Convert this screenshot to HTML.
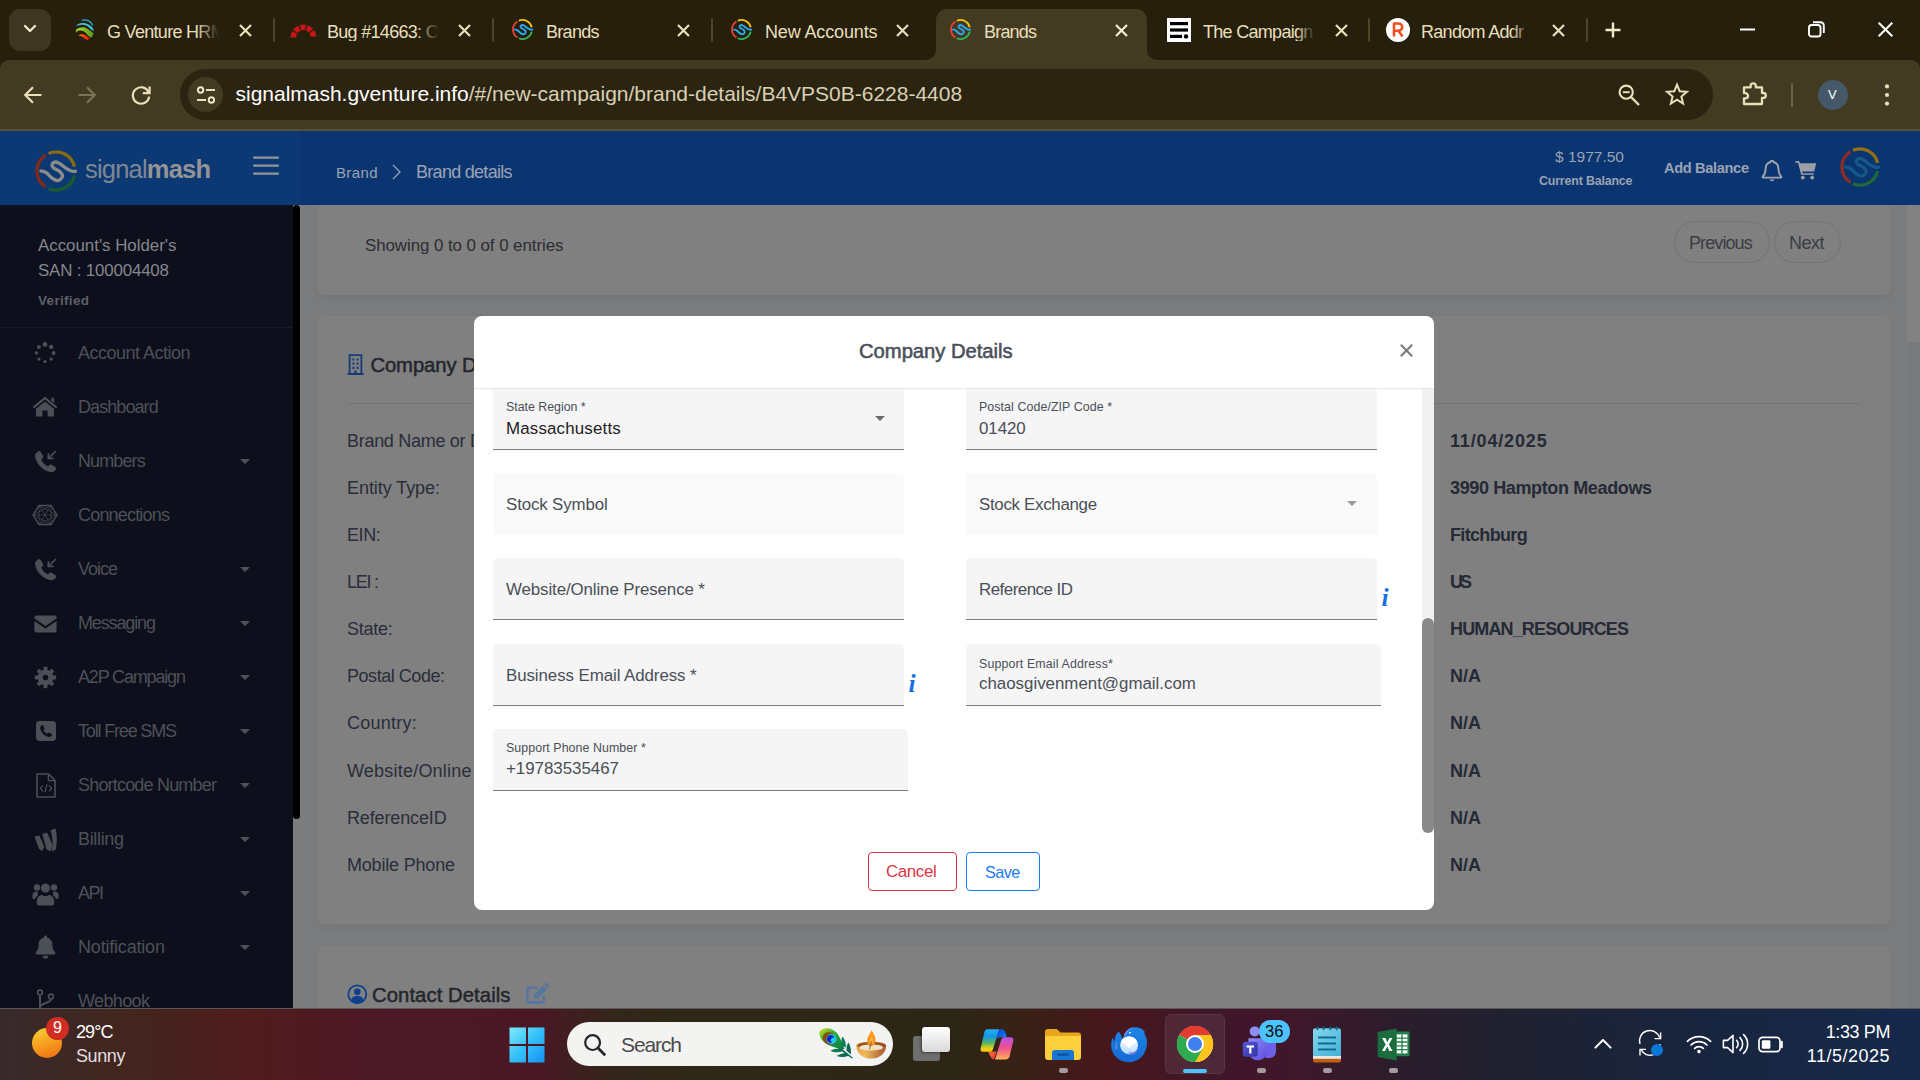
<!DOCTYPE html>
<html lang="en">
<head>
<meta charset="utf-8">
<title>Brands</title>
<style>
*{box-sizing:border-box;margin:0;padding:0}
html,body{width:1920px;height:1080px;overflow:hidden;background:#808080;font-family:"Liberation Sans",sans-serif}
.a{position:absolute}
.t{position:absolute;white-space:nowrap;line-height:1}
svg{position:absolute;overflow:visible}

/* ---------- browser chrome ---------- */
#tabs{left:0;top:0;width:1920px;height:72px;background:#261f0c}
#toolbar{left:0;top:60px;width:1920px;height:71px;background:#423a21;border-radius:9px 9px 0 0;border-bottom:2px solid #57503a}
#urlpill{left:180px;top:69px;width:1533px;height:51px;border-radius:26px;background:#2b2411}
.tab{color:#eadfbb;font-size:18px;top:23px}
.sep{width:2px;height:24px;top:18px;background:#4d452a;border-radius:1px}
.x{stroke:#eadfbb;stroke-width:2.2;fill:none;stroke-linecap:butt}

/* ---------- app ---------- */
#hdrL{left:0;top:131px;width:300px;height:74px;background:#0c3873}
#hdrR{left:300px;top:131px;width:1620px;height:74px;background:#0b3571}
#side{left:0;top:205px;width:293px;height:803px;background:#0d0f1c}
#sscroll{left:293px;top:205px;width:7px;height:614px;background:#000;border-radius:4px}
#page{left:300px;top:205px;width:1620px;height:803px;background:#7b7c7e}
.card{background:#808080;border-radius:6px;box-shadow:0 4px 10px rgba(0,0,0,.05)}
.nav{color:#4e5157;font-size:18px;left:78px;letter-spacing:-.4px}
.car{left:240px;width:0;height:0;border-left:5px solid transparent;border-right:5px solid transparent;border-top:5px solid #4e5157}
.lab{color:#2a2d3a;font-size:18px;left:347px;letter-spacing:-.3px}
.val{color:#262936;font-size:18px;left:1450px;font-weight:bold;letter-spacing:-.5px}

/* ---------- modal ---------- */
#modal{left:474px;top:316px;width:960px;height:594px;background:#fff;border-radius:8px;overflow:hidden}
.f{position:absolute;height:62px;background:#f5f5f5;border-radius:5px 5px 0 0;border-bottom:1.5px solid #7d7d7d}
.f.dis{background:#fafafa;border-bottom:0}
.fl{position:absolute;left:13px;white-space:nowrap;line-height:1;color:#4a4f57}
.sm{font-size:12.4px;top:13.2px}
.bg{font-size:16.9px;top:32.4px}
.ph{font-size:16.9px;top:24.3px}

/* ---------- taskbar ---------- */
#task{left:0;top:1008px;width:1920px;height:72px;background:linear-gradient(90deg,#382a2c 0%,#41261e 6%,#4f1c1c 13%,#4c1827 20%,#4a1825 28%,#33261a 32%,#2e2817 36%,#2d2616 50%,#3a2017 53.5%,#46171c 57.5%,#40172a 63%,#40172a 67%,#2b1d2c 73%,#20212f 78%,#18253f 89%,#16294b 100%);border-top:1px solid #5c5658}
</style>
</head>
<body>

<!-- ================= TAB STRIP ================= -->
<div class="a" id="tabs"></div>
<!-- tab-search button -->
<div class="a" style="left:9px;top:9px;width:42px;height:42px;border-radius:11px;background:#3d3621"></div>
<svg style="left:22px;top:23px" width="16" height="12" viewBox="0 0 16 12"><path d="M3 3 L8 8 L13 3" fill="none" stroke="#f1e8c9" stroke-width="2.4" stroke-linecap="round" stroke-linejoin="round"/></svg>

<!-- tab 1 : G Venture HRM -->
<svg style="left:74.5px;top:18.9px" width="20" height="22" viewBox="0 0 20 22"><defs><linearGradient id="gv1" x1="0" y1="0" x2="1" y2="0"><stop offset="0" stop-color="#a9dc33"/><stop offset="1" stop-color="#5a9a18"/></linearGradient><linearGradient id="gv2" x1="0" y1="0" x2="1" y2="0"><stop offset="0" stop-color="#f6820f"/><stop offset="1" stop-color="#f00d0d"/></linearGradient></defs>
 <path d="M7.4 1.3 C11.6 .6,15.6 2.6,17.4 5.8" fill="none" stroke="#2b9cbd" stroke-width="1.5" stroke-linecap="round"/>
 <path d="M.5 7.6 C3 3.6,8.6 3.2,12.6 5 C16.2 6.6,18.6 9.2,19 12.2 C17.8 11.4,16 10.6,14.6 9 C12.6 6.8,9.2 5.6,5.6 5.9 C3.4 6.1,1.6 6.6,.5 7.6Z" fill="#3fc4e8"/>
 <path d="M.9 13.6 C.2 10.6,2.6 8.6,6 8.4 C9 8.2,11.4 8.8,13.6 10.4 C15.6 11.8,17.6 13.2,18.6 14.6 L16.4 18.8 C14.4 17.8,13 16.4,11.4 14.4 C9.6 12.2,6.8 11.2,4.2 11.6 C2.6 11.8,1.4 12.6,.9 13.6Z" fill="url(#gv1)"/>
 <path d="M3.3 17 C3.9 15.4,6.4 14.8,8.6 15.4 C11 16.2,13.2 17.8,14.6 19.4 L12.4 21.2 C10.6 20.4,9.2 19,7.6 18 C6 17,4.4 16.6,3.3 17Z" fill="url(#gv2)"/>
 <path d="M5.4 18.2 C6.8 18.6,8.2 19.8,9 21 C7.4 20.8,6 19.8,5.4 18.2Z" fill="#1c2a7a"/>
</svg>
<div class="t tab" id="tb1" style="left:107px;width:113px;overflow:hidden;letter-spacing:-0.7px">G Venture HRM</div>
<div class="a" style="left:196px;top:12px;width:26px;height:36px;background:linear-gradient(90deg,rgba(38,31,12,0),#261f0c 90%)"></div>
<svg style="left:239px;top:24px" width="13" height="13" viewBox="0 0 13 13"><path class="x" d="M1 1L12 12M12 1L1 12"/></svg>
<div class="a sep" style="left:273px"></div>

<!-- tab 2 : Bug #14663 -->
<svg style="left:290px;top:20px" width="27" height="18" viewBox="0 0 27 18"><path d="M3.4 17.4 A10.1 10.1 0 0 1 23.6 17.4" fill="none" stroke="#c9161a" stroke-width="5.6" stroke-dasharray="5.1 1.25"/></svg>
<div class="t tab" id="tb2" style="left:327px;width:113px;overflow:hidden;letter-spacing:-0.7px">Bug #14663: C</div>
<div class="a" style="left:416px;top:12px;width:26px;height:36px;background:linear-gradient(90deg,rgba(38,31,12,0),#261f0c 90%)"></div>
<svg style="left:458px;top:24px" width="13" height="13" viewBox="0 0 13 13"><path class="x" d="M1 1L12 12M12 1L1 12"/></svg>
<div class="a sep" style="left:492px"></div>

<!-- tab 3 : Brands -->
<svg style="left:511.5px;top:19.2px" width="21" height="21" viewBox="0 0 42 42"><path d="M10.93 4.89 A19 19 0 0 0 10.93 37.11" fill="none" stroke="#ea4335" stroke-width="3.6"/><path d="M13.58 3.51 A19 19 0 0 1 39.51 16.73" fill="none" stroke="#f9c513" stroke-width="3.6"/><path d="M13.58 38.49 A19 19 0 0 0 39.51 25.27" fill="none" stroke="#34b45a" stroke-width="3.6"/><path d="M6.00 21.00C6.88 21.29,9.38 21.54,11.25 22.75C13.12 23.96,15.25 26.96,17.25 28.25C19.25 29.54,21.54 30.83,23.25 30.50C24.96 30.17,27.25 27.75,27.50 26.25C27.75 24.75,26.29 22.92,24.75 21.50C23.21 20.08,19.50 18.96,18.25 17.75C17.00 16.54,16.83 15.21,17.25 14.25C17.67 13.29,19.33 12.00,20.75 12.00C22.17 12.00,23.92 13.12,25.75 14.25C27.58 15.38,29.83 17.58,31.75 18.75C33.67 19.92,35.79 20.83,37.25 21.25C38.71 21.67,39.96 21.25,40.50 21.25" fill="none" stroke="#29aaf0" stroke-width="3.8" stroke-linecap="round"/></svg>
<div class="t tab" id="tb3" style="left:546px;letter-spacing:-0.71px">Brands</div>
<svg style="left:677px;top:24px" width="13" height="13" viewBox="0 0 13 13"><path class="x" d="M1 1L12 12M12 1L1 12"/></svg>
<div class="a sep" style="left:711px"></div>

<!-- tab 4 : New Accounts -->
<svg style="left:730.5px;top:19.2px" width="21" height="21" viewBox="0 0 42 42"><path d="M10.93 4.89 A19 19 0 0 0 10.93 37.11" fill="none" stroke="#ea4335" stroke-width="3.6"/><path d="M13.58 3.51 A19 19 0 0 1 39.51 16.73" fill="none" stroke="#f9c513" stroke-width="3.6"/><path d="M13.58 38.49 A19 19 0 0 0 39.51 25.27" fill="none" stroke="#34b45a" stroke-width="3.6"/><path d="M6.00 21.00C6.88 21.29,9.38 21.54,11.25 22.75C13.12 23.96,15.25 26.96,17.25 28.25C19.25 29.54,21.54 30.83,23.25 30.50C24.96 30.17,27.25 27.75,27.50 26.25C27.75 24.75,26.29 22.92,24.75 21.50C23.21 20.08,19.50 18.96,18.25 17.75C17.00 16.54,16.83 15.21,17.25 14.25C17.67 13.29,19.33 12.00,20.75 12.00C22.17 12.00,23.92 13.12,25.75 14.25C27.58 15.38,29.83 17.58,31.75 18.75C33.67 19.92,35.79 20.83,37.25 21.25C38.71 21.67,39.96 21.25,40.50 21.25" fill="none" stroke="#29aaf0" stroke-width="3.8" stroke-linecap="round"/></svg>
<div class="t tab" id="tb4" style="left:765px;letter-spacing:-0.14px">New Accounts</div>
<svg style="left:896px;top:24px" width="13" height="13" viewBox="0 0 13 13"><path class="x" d="M1 1L12 12M12 1L1 12"/></svg>

<!-- tab 5 : Brands (active) -->
<div class="a" style="left:936px;top:9px;width:211px;height:51px;background:#423a21;border-radius:11px 11px 0 0"></div>
<svg style="left:926px;top:50px" width="10" height="10" viewBox="0 0 10 10"><path d="M10 0 V10 H0 A10 10 0 0 0 10 0Z" fill="#423a21"/></svg>
<svg style="left:1147px;top:50px" width="10" height="10" viewBox="0 0 10 10"><path d="M0 0 V10 H10 A10 10 0 0 1 0 0Z" fill="#423a21"/></svg>
<svg style="left:949.5px;top:19.2px" width="21" height="21" viewBox="0 0 42 42"><path d="M10.93 4.89 A19 19 0 0 0 10.93 37.11" fill="none" stroke="#ea4335" stroke-width="3.6"/><path d="M13.58 3.51 A19 19 0 0 1 39.51 16.73" fill="none" stroke="#f9c513" stroke-width="3.6"/><path d="M13.58 38.49 A19 19 0 0 0 39.51 25.27" fill="none" stroke="#34b45a" stroke-width="3.6"/><path d="M6.00 21.00C6.88 21.29,9.38 21.54,11.25 22.75C13.12 23.96,15.25 26.96,17.25 28.25C19.25 29.54,21.54 30.83,23.25 30.50C24.96 30.17,27.25 27.75,27.50 26.25C27.75 24.75,26.29 22.92,24.75 21.50C23.21 20.08,19.50 18.96,18.25 17.75C17.00 16.54,16.83 15.21,17.25 14.25C17.67 13.29,19.33 12.00,20.75 12.00C22.17 12.00,23.92 13.12,25.75 14.25C27.58 15.38,29.83 17.58,31.75 18.75C33.67 19.92,35.79 20.83,37.25 21.25C38.71 21.67,39.96 21.25,40.50 21.25" fill="none" stroke="#29aaf0" stroke-width="3.8" stroke-linecap="round"/></svg>
<div class="t tab" id="tb5" style="left:984px;letter-spacing:-0.81px">Brands</div>
<svg style="left:1115px;top:24px" width="13" height="13" viewBox="0 0 13 13"><path class="x" d="M1 1L12 12M12 1L1 12" style="stroke:#f5eed6"/></svg>

<!-- tab 6 : The Campaign -->
<svg style="left:1167px;top:18px" width="24" height="24" viewBox="0 0 24 24">
 <rect width="24" height="24" fill="#fff"/>
 <rect x="3" y="4" width="18" height="3.2" fill="#000"/><rect x="3" y="10.4" width="18" height="3.2" fill="#000"/><rect x="3" y="16.8" width="12" height="3.2" fill="#000"/><circle cx="19" cy="18.4" r="2.2" fill="#000"/>
</svg>
<div class="t tab" id="tb6" style="left:1203px;width:113px;overflow:hidden;letter-spacing:-0.7px">The Campaign</div>
<div class="a" style="left:1296px;top:12px;width:22px;height:36px;background:linear-gradient(90deg,rgba(38,31,12,0),#261f0c 90%)"></div>
<svg style="left:1335px;top:24px" width="13" height="13" viewBox="0 0 13 13"><path class="x" d="M1 1L12 12M12 1L1 12"/></svg>
<div class="a sep" style="left:1368px"></div>

<!-- tab 7 : Random Addr -->
<svg style="left:1386px;top:18px" width="24" height="24" viewBox="0 0 24 24"><circle cx="12" cy="12" r="12" fill="#fff"/><path d="M8 18.5 V5.5 H12.6 A3.6 3.6 0 0 1 12.6 12.7 H8 M12.4 12.7 L16.6 18.5" fill="none" stroke="#f0501e" stroke-width="2.6" stroke-linejoin="round"/></svg>
<div class="t tab" id="tb7" style="left:1421px;width:113px;overflow:hidden;letter-spacing:-0.7px">Random Addr</div>
<div class="a" style="left:1510px;top:12px;width:26px;height:36px;background:linear-gradient(90deg,rgba(38,31,12,0),#261f0c 90%)"></div>
<svg style="left:1552px;top:24px" width="13" height="13" viewBox="0 0 13 13"><path class="x" d="M1 1L12 12M12 1L1 12"/></svg>
<div class="a sep" style="left:1586px"></div>

<!-- new tab + window controls -->
<svg style="left:1605px;top:22px" width="16" height="16" viewBox="0 0 16 16"><path d="M8 0.5V15.5M0.5 8H15.5" stroke="#f1e8c9" stroke-width="2.4" fill="none"/></svg>
<svg style="left:1740px;top:28px" width="15" height="3" viewBox="0 0 15 3"><path d="M0 1.5H15" stroke="#fff" stroke-width="2"/></svg>
<svg style="left:1808px;top:21px" width="17" height="17" viewBox="0 0 17 17"><rect x="1" y="4" width="11.5" height="11.5" rx="2.6" fill="none" stroke="#fff" stroke-width="1.9"/><path d="M5 1.2H12.6A3.2 3.2 0 0 1 15.8 4.4V12" fill="none" stroke="#fff" stroke-width="1.9"/></svg>
<svg style="left:1878px;top:22px" width="15" height="15" viewBox="0 0 15 15"><path d="M0.7 0.7L14.3 14.3M14.3 0.7L0.7 14.3" stroke="#fff" stroke-width="2" fill="none"/></svg>
<div class="a" id="toolbar"></div>
<div class="a" id="urlpill"></div>
<!-- nav buttons -->
<svg style="left:23px;top:85px" width="20" height="20" viewBox="0 0 20 20"><path d="M18.5 10H2.5M10 2.2L2.2 10L10 17.8" fill="none" stroke="#eadfbb" stroke-width="2.2" stroke-linejoin="miter"/></svg>
<svg style="left:77px;top:85px" width="20" height="20" viewBox="0 0 20 20"><path d="M1.5 10H17.5M10 2.2L17.8 10L10 17.8" fill="none" stroke="#7d7455" stroke-width="2.2"/></svg>
<svg style="left:130px;top:84px" width="22" height="22" viewBox="0 0 22 22"><path d="M18.6 8.2 A8.2 8.2 0 1 0 19.2 12.6" fill="none" stroke="#eadfbb" stroke-width="2.2"/><path d="M19.6 2.4V9.2H12.8" fill="none" stroke="#eadfbb" stroke-width="2.2"/></svg>
<!-- site info chip -->
<div class="a" style="left:188px;top:77px;width:35px;height:35px;border-radius:50%;background:#423a21"></div>
<svg style="left:195px;top:84px" width="22" height="22" viewBox="0 0 22 22">
 <circle cx="5.6" cy="6" r="2.7" fill="none" stroke="#f1e8c9" stroke-width="1.9"/><path d="M11 6H20" stroke="#f1e8c9" stroke-width="1.9"/>
 <circle cx="16.4" cy="16" r="2.7" fill="none" stroke="#f1e8c9" stroke-width="1.9"/><path d="M2 16H11" stroke="#f1e8c9" stroke-width="1.9"/>
</svg>
<div class="t" id="url" style="left:235.5px;top:83px;font-size:21px;color:#ffffff;letter-spacing:-0.01px"><span>signalmash.gventure.info</span><span style="color:#d9d0b4">/#/new-campaign/brand-details/B4VPS0B-6228-4408</span></div>
<!-- zoom + star -->
<svg style="left:1617px;top:83px" width="24" height="24" viewBox="0 0 24 24"><circle cx="9.2" cy="9.2" r="6.6" fill="none" stroke="#eadfbb" stroke-width="2.1"/><path d="M14 14L22 22" stroke="#eadfbb" stroke-width="2.4"/><path d="M5.8 9.2H12.6" stroke="#eadfbb" stroke-width="2"/></svg>
<svg style="left:1665px;top:82px" width="24" height="24" viewBox="0 0 24 24"><path d="M12 2.6 L14.7 9.3 L21.9 9.8 L16.4 14.5 L18.1 21.5 L12 17.7 L5.9 21.5 L7.6 14.5 L2.1 9.8 L9.3 9.3 Z" fill="none" stroke="#eadfbb" stroke-width="2" stroke-linejoin="miter"/></svg>
<!-- extensions -->
<svg style="left:1741px;top:81px" width="26" height="26" viewBox="0 0 26 26"><path d="M3 6.4 H9.6 V5 A2.6 2.6 0 0 1 14.8 5 V6.4 H21 V12 H22.4 A2.4 2.4 0 0 1 22.4 16.8 H21 V23 H3 V17.4 H4.4 A2.6 2.6 0 0 0 4.4 12.2 H3 Z" fill="none" stroke="#eadfbb" stroke-width="2.3" stroke-linejoin="round"/></svg>
<div class="a" style="left:1791px;top:83px;width:2px;height:24px;background:#6b6040;border-radius:1px"></div>
<!-- avatar -->
<div class="a" style="left:1818px;top:80px;width:30px;height:30px;border-radius:50%;background:#44586a"></div>
<div class="t" style="left:1828px;top:88px;font-size:13px;color:#fff">V</div>
<!-- kebab -->
<svg style="left:1883px;top:83px" width="8" height="24" viewBox="0 0 8 24"><circle cx="4" cy="3.4" r="2.1" fill="#eadfbb"/><circle cx="4" cy="12" r="2.1" fill="#eadfbb"/><circle cx="4" cy="20.6" r="2.1" fill="#eadfbb"/></svg>

<!-- ================= APP ================= -->
<div class="a" id="hdrL"></div>
<div class="a" id="hdrR"></div>
<!-- header : logo -->
<svg style="left:35.2px;top:149.7px" width="42" height="42" viewBox="0 0 42 42"><path d="M10.93 4.89 A19 19 0 0 0 10.93 37.11" fill="none" stroke="#7e2a1c" stroke-width="3.4"/><path d="M13.58 3.51 A19 19 0 0 1 39.51 16.73" fill="none" stroke="#8a6a12" stroke-width="3.4"/><path d="M13.58 38.49 A19 19 0 0 0 39.51 25.27" fill="none" stroke="#1b5a30" stroke-width="3.4"/><path d="M6.00 21.00C6.88 21.29,9.38 21.54,11.25 22.75C13.12 23.96,15.25 26.96,17.25 28.25C19.25 29.54,21.54 30.83,23.25 30.50C24.96 30.17,27.25 27.75,27.50 26.25C27.75 24.75,26.29 22.92,24.75 21.50C23.21 20.08,19.50 18.96,18.25 17.75C17.00 16.54,16.83 15.21,17.25 14.25C17.67 13.29,19.33 12.00,20.75 12.00C22.17 12.00,23.92 13.12,25.75 14.25C27.58 15.38,29.83 17.58,31.75 18.75C33.67 19.92,35.79 20.83,37.25 21.25C38.71 21.67,39.96 21.25,40.50 21.25" fill="none" stroke="#8c8c8c" stroke-width="3.3" stroke-linecap="round"/></svg>
<div class="t" id="lg1" style="left:85px;top:157px;font-size:25.5px;color:#7f8794;letter-spacing:-0.81px">signal<b style="font-weight:bold;color:#949494">mash</b></div>
<!-- hamburger -->
<svg style="left:254px;top:156px" width="24" height="20" viewBox="0 0 24 20"><path d="M0 1.6H24M0 9.6H24M0 17.6H24" stroke="#94979c" stroke-width="2.2" fill="none" stroke-linecap="round"/></svg>
<!-- breadcrumb -->
<div class="t" id="bc1" style="left:336px;top:165.2px;font-size:15px;color:#9aa3b4;letter-spacing:0.37px">Brand</div>
<svg style="left:392px;top:164px" width="9" height="16" viewBox="0 0 9 16"><path d="M1 1L8 8L1 15" fill="none" stroke="#9aa3b4" stroke-width="1.3"/></svg>
<div class="t" id="bc2" style="left:416px;top:162.8px;font-size:18px;color:#9aa3b4;letter-spacing:-0.71px">Brand details</div>
<!-- balance -->
<div class="t" id="bal1" style="left:1555px;top:148.6px;font-size:15.5px;color:#9aa3b4;letter-spacing:0.0px">$ 1977.50</div>
<div class="t" id="bal2" style="left:1539px;top:174.5px;font-size:12.4px;color:#9aa3b4;font-weight:bold;letter-spacing:-0.16px">Current Balance</div>
<div class="t" id="bal3" style="left:1664px;top:160.6px;font-size:14.6px;color:#9aa3b4;font-weight:bold;letter-spacing:-0.34px">Add Balance</div>
<!-- bell -->
<svg style="left:1761px;top:159px" width="22" height="24" viewBox="0 0 22 24"><path d="M11 1.6 C11.9 1.6,12.4 2.2,12.4 3 C15.8 3.8,17.4 6.6,17.4 10 C17.4 14,18.6 15.8,20.2 17.4 V18.6 H1.8 V17.4 C3.4 15.8,4.6 14,4.6 10 C4.6 6.6,6.2 3.8,9.6 3 C9.6 2.2,10.1 1.6,11 1.6 Z" fill="none" stroke="#a0a4ad" stroke-width="1.9" stroke-linejoin="round"/><path d="M8.6 20.4 A2.5 2.5 0 0 0 13.4 20.4 Z" fill="#a0a4ad"/></svg>
<!-- cart -->
<svg style="left:1795px;top:160px" width="22" height="20" viewBox="0 0 22 20"><path d="M0.4 1 H4.2 L4.9 3.2 H21.2 L19.2 11.4 H7.2 L7.6 13.2 H18.8 V14.8 H6.2 L3 2.8 H0.4 Z" fill="#9b9fa8"/><circle cx="7.8" cy="17.6" r="1.9" fill="#9b9fa8"/><circle cx="17.2" cy="17.6" r="1.9" fill="#9b9fa8"/></svg>
<!-- avatar logo -->
<svg style="left:1839.5px;top:147.3px" width="40" height="40" viewBox="0 0 42 42"><path d="M10.93 4.89 A19 19 0 0 0 10.93 37.11" fill="none" stroke="#8e2d25" stroke-width="3.4"/><path d="M13.58 3.51 A19 19 0 0 1 39.51 16.73" fill="none" stroke="#94700f" stroke-width="3.4"/><path d="M13.58 38.49 A19 19 0 0 0 39.51 25.27" fill="none" stroke="#1e6a38" stroke-width="3.4"/><path d="M6.00 21.00C6.88 21.29,9.38 21.54,11.25 22.75C13.12 23.96,15.25 26.96,17.25 28.25C19.25 29.54,21.54 30.83,23.25 30.50C24.96 30.17,27.25 27.75,27.50 26.25C27.75 24.75,26.29 22.92,24.75 21.50C23.21 20.08,19.50 18.96,18.25 17.75C17.00 16.54,16.83 15.21,17.25 14.25C17.67 13.29,19.33 12.00,20.75 12.00C22.17 12.00,23.92 13.12,25.75 14.25C27.58 15.38,29.83 17.58,31.75 18.75C33.67 19.92,35.79 20.83,37.25 21.25C38.71 21.67,39.96 21.25,40.50 21.25" fill="none" stroke="#155a86" stroke-width="3.3" stroke-linecap="round"/></svg>
<div class="a" id="side"></div>
<div class="t" id="sd1" style="left:38px;top:238px;font-size:16.9px;color:#85878d;letter-spacing:-0.02px">Account's Holder's</div>
<div class="t" id="sd2" style="left:38px;top:262.8px;font-size:16.9px;color:#85878d;letter-spacing:-0.17px">SAN : 100004408</div>
<div class="t" id="sd3" style="left:38px;top:293.6px;font-size:13.5px;color:#5e6067;font-weight:bold;letter-spacing:0.32px">Verified</div>
<div class="a" style="left:0;top:327px;width:293px;height:1px;background:#171a28"></div>
<svg style="left:34px;top:342px" width="22" height="22" viewBox="0 0 22 22"><circle cx="11.0" cy="2.4" r="2.4" fill="#4b4f56"/><circle cx="17.1" cy="4.9" r="2.2" fill="#4b4f56"/><circle cx="19.6" cy="11.0" r="1.9" fill="#4b4f56"/><circle cx="17.1" cy="17.1" r="1.7" fill="#4b4f56"/><circle cx="11.0" cy="19.6" r="1.6" fill="#4b4f56"/><circle cx="4.9" cy="17.1" r="1.6" fill="#4b4f56"/><circle cx="2.4" cy="11.0" r="1.7" fill="#4b4f56"/><circle cx="4.9" cy="4.9" r="2.0" fill="#4b4f56"/></svg>
<svg style="left:32px;top:396px" width="26" height="21" viewBox="0 0 26 21"><path d="M13 .6 L25.4 11 L24 12.6 L13 3.6 L2 12.6 L.6 11 Z" fill="#4b4f56"/><path d="M19.4 1.8h2.8v5.4l-2.8-2.4z" fill="#4b4f56"/><path d="M13 5.4 L22 12.8 V20.4 H15.6 V14.6 H10.4 V20.4 H4 V12.8 Z" fill="#4b4f56"/></svg>
<svg style="left:34px;top:450px" width="24" height="23" viewBox="0 0 24 23"><path d="M4.2 1.6 C5 .8,6.2 1,6.8 2 L9 6 C9.4 6.8,9.2 7.6,8.6 8.2 L7.2 9.6 C8.6 12.8,10.8 15,14 16.6 L15.4 15 C16 14.4,17 14.2,17.8 14.8 L21.4 17.2 C22.2 17.8,22.4 18.8,21.8 19.6 C20.4 21.6,18.6 22.6,16.4 22.2 C8.4 20.6,2 13.6,1 5.8 C.8 4,2.6 2.8,4.2 1.6Z" fill="#4b4f56"/><path d="M21.8 1 L14.6 8.2 M14.4 3.2 V8.4 H19.6" fill="none" stroke="#4b4f56" stroke-width="1.7"/></svg>
<svg style="left:34px;top:558px" width="24" height="23" viewBox="0 0 24 23"><path d="M4.2 1.6 C5 .8,6.2 1,6.8 2 L9 6 C9.4 6.8,9.2 7.6,8.6 8.2 L7.2 9.6 C8.6 12.8,10.8 15,14 16.6 L15.4 15 C16 14.4,17 14.2,17.8 14.8 L21.4 17.2 C22.2 17.8,22.4 18.8,21.8 19.6 C20.4 21.6,18.6 22.6,16.4 22.2 C8.4 20.6,2 13.6,1 5.8 C.8 4,2.6 2.8,4.2 1.6Z" fill="#4b4f56"/><path d="M21.8 1 L14.6 8.2 M14.4 3.2 V8.4 H19.6" fill="none" stroke="#4b4f56" stroke-width="1.7"/></svg>
<svg style="left:32px;top:504px" width="26" height="22" viewBox="0 0 25 22"><polygon points="24.5,11.0 18.5,20.5 6.5,20.5 0.5,11.0 6.5,1.5 18.5,1.5" fill="none" stroke="#4b4f56" stroke-width="1.4"/><path d="M24.5 11.0L6.5 20.5M24.5 11.0L0.5 11.0M24.5 11.0L6.5 1.5M18.5 20.5L0.5 11.0M18.5 20.5L6.5 1.5M18.5 20.5L18.5 1.5M6.5 20.5L6.5 1.5M6.5 20.5L18.5 1.5M0.5 11.0L18.5 1.5" stroke="#4b4f56" stroke-width=".7" fill="none"/></svg>
<svg style="left:34px;top:615px" width="23" height="18" viewBox="0 0 23 18"><path d="M2.4 .4 H20.6 A2 2 0 0 1 22.6 2.4 V3.4 L11.5 11 L.4 3.4 V2.4 A2 2 0 0 1 2.4 .4Z" fill="#4b4f56"/><path d="M.4 6 L11.5 13.6 L22.6 6 V15.6 A2 2 0 0 1 20.6 17.6 H2.4 A2 2 0 0 1 .4 15.6Z" fill="#4b4f56"/></svg>
<svg style="left:35px;top:667px" width="21" height="21" viewBox="0 0 20.6 20.6"><rect x="8.4" y="-.2" width="3.8" height="5" rx=".8" fill="#4b4f56" transform="rotate(0 10.3 10.3)"/><rect x="8.4" y="-.2" width="3.8" height="5" rx=".8" fill="#4b4f56" transform="rotate(45 10.3 10.3)"/><rect x="8.4" y="-.2" width="3.8" height="5" rx=".8" fill="#4b4f56" transform="rotate(90 10.3 10.3)"/><rect x="8.4" y="-.2" width="3.8" height="5" rx=".8" fill="#4b4f56" transform="rotate(135 10.3 10.3)"/><rect x="8.4" y="-.2" width="3.8" height="5" rx=".8" fill="#4b4f56" transform="rotate(180 10.3 10.3)"/><rect x="8.4" y="-.2" width="3.8" height="5" rx=".8" fill="#4b4f56" transform="rotate(225 10.3 10.3)"/><rect x="8.4" y="-.2" width="3.8" height="5" rx=".8" fill="#4b4f56" transform="rotate(270 10.3 10.3)"/><rect x="8.4" y="-.2" width="3.8" height="5" rx=".8" fill="#4b4f56" transform="rotate(315 10.3 10.3)"/><circle cx="10.3" cy="10.3" r="5.2" fill="none" stroke="#4b4f56" stroke-width="5"/></svg>
<svg style="left:36px;top:721px" width="20" height="20" viewBox="0 0 20 20"><rect width="20" height="20" rx="3.4" fill="#4b4f56"/><path d="M5.6 4.4 C6 4,6.8 4,7.2 4.6 L8.4 6.8 C8.6 7.2,8.6 7.8,8.2 8.2 L7.4 9 C8.2 10.8,9.4 12,11.2 12.8 L12 12 C12.4 11.6,13 11.6,13.4 11.8 L15.6 13 C16.2 13.4,16.2 14.2,15.8 14.6 C15 15.6,14 16.2,12.8 16 C8.4 15,5 11.6,4.2 7.2 C4 6,4.8 5.2,5.6 4.4Z" fill="#0d0f1c"/></svg>
<svg style="left:36px;top:773px" width="20" height="25" viewBox="0 0 20 25"><path d="M1 1 H12.6 L19 7.4 V24 H1Z" fill="none" stroke="#4b4f56" stroke-width="1.6" stroke-linejoin="round"/><path d="M12.4 1.2 V7.6 H18.8" fill="none" stroke="#4b4f56" stroke-width="1.4"/><path d="M7 12.4 L4.4 15.4 L7 18.4 M13 12.4 L15.6 15.4 L13 18.4 M11 11.4 L9 19.4" fill="none" stroke="#4b4f56" stroke-width="1.3"/></svg>
<svg style="left:34px;top:828px" width="24" height="24" viewBox="0 0 24 24"><path d="M.6 8.6 L5.4 7.6 L10.4 19 L8 23.2 L4.8 20.6Z" fill="#4b4f56"/><path d="M8.2 6 L13 4.4 L18.6 17 L16.4 23.2 L12.6 21.4 Z" fill="#4b4f56"/><path d="M16.4 2.2 L21.4 .6 C23 6,23.4 14,21.8 21.6 L17.4 23.4 C19.4 17,19 9,16.4 2.2Z" fill="#4b4f56"/></svg>
<svg style="left:32px;top:882px" width="27" height="24" viewBox="0 0 27 24"><circle cx="5" cy="5.4" r="3.2" fill="#4b4f56"/><circle cx="22" cy="5.4" r="3.2" fill="#4b4f56"/><circle cx="13.5" cy="6" r="4.6" fill="#4b4f56"/><path d="M.4 13.6 C.4 11,2 9.6,4.2 9.6 H6.4 C5.6 11,5.6 12.4,6 13.4 C4 14.4,3.4 15.6,3.2 17 H1.6 C.8 17,.4 16.4,.4 15.6Z" fill="#4b4f56"/><path d="M26.6 13.6 C26.6 11,25 9.6,22.8 9.6 H20.6 C21.4 11,21.4 12.4,21 13.4 C23 14.4,23.6 15.6,23.8 17 H25.4 C26.2 17,26.6 16.4,26.6 15.6Z" fill="#4b4f56"/><path d="M4.8 21.4 V19.4 C4.8 15.6,7.4 13,10 13 C11 13.8,12 14.2,13.5 14.2 C15 14.2,16 13.8,17 13 C19.6 13,22.2 15.6,22.2 19.4 V21.4 C22.2 22.8,21.2 23.6,20 23.6 H7 C5.8 23.6,4.8 22.8,4.8 21.4Z" fill="#4b4f56"/></svg>
<svg style="left:35px;top:935px" width="21" height="24" viewBox="0 0 21 24"><path d="M10.5 .4 C11.4 .4,12 1,12 1.8 V2.6 C15.4 3.4,17.4 6.2,17.4 9.6 C17.4 14,18.6 15.6,20 17 C20.8 17.8,20.4 19.4,19 19.4 H2 C.6 19.4,.2 17.8,1 17 C2.4 15.6,3.6 14,3.6 9.6 C3.6 6.2,5.6 3.4,9 2.6 V1.8 C9 1,9.6 .4,10.5 .4Z" fill="#4b4f56"/><path d="M7.6 20.8 H13.4 A2.9 2.9 0 0 1 7.6 20.8Z" fill="#4b4f56"/></svg>
<svg style="left:36px;top:989px" width="19" height="22" viewBox="0 0 19 22"><circle cx="4" cy="3.6" r="2.4" fill="none" stroke="#4b4f56" stroke-width="1.7"/><circle cx="15" cy="7.6" r="2.4" fill="none" stroke="#4b4f56" stroke-width="1.7"/><path d="M4 6 V22 M15 10 C15 14,8 13,4.4 17" fill="none" stroke="#4b4f56" stroke-width="2"/></svg>
<div class="t nav" id="nv0" style="top:344.0px;letter-spacing:-0.51px">Account Action</div>
<div class="t nav" id="nv1" style="top:398.0px;letter-spacing:-0.92px">Dashboard</div>
<div class="t nav" id="nv2" style="top:452.0px;letter-spacing:-0.89px">Numbers</div>
<div class="a car" style="top:459px"></div>
<div class="t nav" id="nv3" style="top:506.0px;letter-spacing:-0.81px">Connections</div>
<div class="t nav" id="nv4" style="top:560.0px;letter-spacing:-1.01px">Voice</div>
<div class="a car" style="top:567px"></div>
<div class="t nav" id="nv5" style="top:614.0px;letter-spacing:-1.13px">Messaging</div>
<div class="a car" style="top:621px"></div>
<div class="t nav" id="nv6" style="top:668.0px;letter-spacing:-1.16px">A2P Campaign</div>
<div class="a car" style="top:675px"></div>
<div class="t nav" id="nv7" style="top:722.0px;letter-spacing:-1.17px">Toll Free SMS</div>
<div class="a car" style="top:729px"></div>
<div class="t nav" id="nv8" style="top:776.0px;letter-spacing:-0.81px">Shortcode Number</div>
<div class="a car" style="top:783px"></div>
<div class="t nav" id="nv9" style="top:830.0px;letter-spacing:-0.34px">Billing</div>
<div class="a car" style="top:837px"></div>
<div class="t nav" id="nv10" style="top:884.0px;letter-spacing:-1.51px">API</div>
<div class="a car" style="top:891px"></div>
<div class="t nav" id="nv11" style="top:938.0px;letter-spacing:-0.19px">Notification</div>
<div class="a car" style="top:945px"></div>
<div class="t nav" id="nv12" style="top:992.0px;letter-spacing:-0.62px">Webhook</div>
<div class="a" style="left:293px;top:205px;width:7px;height:803px;background:#7c7c7c"></div>
<div class="a" id="sscroll"></div>
<div class="a" id="page"></div>
<!-- card 1 : table footer -->
<div class="a card" style="left:318px;top:205px;width:1572px;height:90px;border-radius:0 0 6px 6px"></div>
<div class="t" id="sh1" style="left:365px;top:237.7px;font-size:16.9px;color:#2c2d31;letter-spacing:-0.06px">Showing 0 to 0 of 0 entries</div>
<div class="a" style="left:1674px;top:221px;width:96px;height:42px;border:1px solid #727375;border-radius:21px"></div>
<div class="t" id="pv1" style="left:1689px;top:233.5px;font-size:18px;color:#3a3c42;letter-spacing:-0.9px">Previous</div>
<div class="a" style="left:1774px;top:221px;width:67px;height:42px;border:1px solid #727375;border-radius:21px"></div>
<div class="t" id="pv2" style="left:1789px;top:233.5px;font-size:18px;color:#3a3c42;letter-spacing:-0.51px">Next</div>
<!-- card 2 : company details -->
<div class="a card" style="left:318px;top:316px;width:1572px;height:608px"></div>
<svg style="left:347px;top:354px" width="17" height="21" viewBox="0 0 17 21"><path d="M2.6 1.2H14.4V19.8H2.6Z" fill="none" stroke="#143c78" stroke-width="1.8"/><path d="M0.4 20H16.6" stroke="#143c78" stroke-width="1.8"/><path d="M5.4 4.4h2v2.2h-2zM9.6 4.4h2v2.2h-2zM5.4 8.6h2v2.2h-2zM9.6 8.6h2v2.2h-2zM5.4 12.8h2v2.2h-2zM9.6 12.8h2v2.2h-2zM7.4 16.6h2.2v3h-2.2z" fill="#143c78"/></svg>
<div class="t" id="cd1" style="left:370.4px;top:355.2px;font-size:20.25px;color:#24262c;font-weight:normal;-webkit-text-stroke:.5px #24262c;letter-spacing:-0.09px">Company Details</div>
<div class="a" style="left:347px;top:403px;width:1514px;height:1px;background:#737476"></div>
<div class="t lab" id="lb0" style="top:431.8px;letter-spacing:-0.29px">Brand Name or DBA:</div>
<div class="t val" id="vl0" style="top:431.8px;letter-spacing:0.84px">11/04/2025</div>
<div class="t lab" id="lb1" style="top:478.9px;letter-spacing:-0.07px">Entity Type:</div>
<div class="t val" id="vl1" style="top:478.9px;letter-spacing:-0.37px">3990 Hampton Meadows</div>
<div class="t lab" id="lb2" style="top:526.0px;letter-spacing:-0.44px">EIN:</div>
<div class="t val" id="vl2" style="top:526.0px;letter-spacing:-0.66px">Fitchburg</div>
<div class="t lab" id="lb3" style="top:573.1px;letter-spacing:-1.26px">LEI :</div>
<div class="t val" id="vl3" style="top:573.1px;letter-spacing:-3.02px">US</div>
<div class="t lab" id="lb4" style="top:620.2px;letter-spacing:-0.27px">State:</div>
<div class="t val" id="vl4" style="top:620.2px;letter-spacing:-0.86px">HUMAN_RESOURCES</div>
<div class="t lab" id="lb5" style="top:667.3px;letter-spacing:-0.46px">Postal Code:</div>
<div class="t val" id="vl5" style="top:667.3px;letter-spacing:0.0px">N/A</div>
<div class="t lab" id="lb6" style="top:714.4px;letter-spacing:0.24px">Country:</div>
<div class="t val" id="vl6" style="top:714.4px;letter-spacing:0.0px">N/A</div>
<div class="t lab" id="lb7" style="top:761.5px;letter-spacing:0.21px">Website/Online Presence:</div>
<div class="t val" id="vl7" style="top:761.5px;letter-spacing:0.0px">N/A</div>
<div class="t lab" id="lb8" style="top:808.6px;letter-spacing:-0.14px">ReferenceID</div>
<div class="t val" id="vl8" style="top:808.6px;letter-spacing:0.0px">N/A</div>
<div class="t lab" id="lb9" style="top:855.7px;letter-spacing:-0.19px">Mobile Phone</div>
<div class="t val" id="vl9" style="top:855.7px;letter-spacing:0.0px">N/A</div>
<!-- card 3 : contact details -->
<div class="a card" style="left:318px;top:946px;width:1572px;height:80px"></div>
<svg style="left:346.8px;top:983.6px" width="20.6" height="20.6" viewBox="0 0 22 22"><circle cx="11" cy="11" r="9.6" fill="none" stroke="#0f3f8c" stroke-width="1.9"/><circle cx="11" cy="8.4" r="3.5" fill="#0f3f8c"/><path d="M4.4 17.2 C5.4 13.6,8 12.8,11 12.8 C14 12.8,16.6 13.6,17.6 17.2 C15.8 19.4,13.6 20.4,11 20.4 C8.4 20.4,6.2 19.4,4.4 17.2Z" fill="#0f3f8c"/></svg>
<div class="t" id="ct1" style="left:372px;top:984.5px;font-size:20.25px;color:#24262c;font-weight:normal;-webkit-text-stroke:.5px #24262c;letter-spacing:0.08px">Contact Details</div>
<svg style="left:526px;top:982.6px" width="24" height="21" viewBox="0 0 24 21"><path d="M17.6 12.4V17.8A1.6 1.6 0 0 1 16 19.4H3A1.6 1.6 0 0 1 1.4 17.8V6.4A1.6 1.6 0 0 1 3 4.8H11.6" fill="none" stroke="#56759f" stroke-width="2.6"/><path d="M8 11.6 L17.2 2.4 L21 6.2 L11.8 15.4 L7.4 16.2 Z" fill="#56759f"/><path d="M18.4 1.2 L19.3 .3 A1.3 1.3 0 0 1 21.1 .3 L23.1 2.3 A1.3 1.3 0 0 1 23.1 4.1 L22.2 5 Z" fill="#56759f"/></svg>
<!-- page scrollbar hint -->
<div class="a" style="left:1907px;top:205px;width:13px;height:803px;background:#797a7c"></div><div class="a" style="left:1907px;top:205px;width:13px;height:137px;background:#828283"></div>

<!-- ================= MODAL ================= -->
<div class="a" id="modal">
 <div class="t" id="mt" style="left:385px;top:25px;font-size:20.25px;font-weight:normal;-webkit-text-stroke:.55px #4b4f5a;color:#4b4f5a;letter-spacing:-0.04px">Company Details</div>
 <svg style="left:926px;top:28px" width="13" height="13" viewBox="0 0 13 13"><path d="M.8 .8L12.2 12.2M12.2 .8L.8 12.2" stroke="#7b7b7b" stroke-width="2.1" fill="none"/></svg>
 <div class="a" style="left:0;top:72px;width:960px;height:1px;background:#e3e6ee;z-index:3"></div>
 <!-- scroll track + thumb -->
 <div class="a" style="left:948px;top:73px;width:12px;height:444px;background:#f1f1f1"></div>
 <div class="a" style="left:948.2px;top:302px;width:11.6px;height:215px;background:#8a8a8a;border-radius:6px"></div>

 <!-- row 1 -->
 <div class="f" style="left:19px;top:72px;width:411px;border-radius:0">
   <div class="fl sm" id="f1a" style="top:12.6px;letter-spacing:-0.02px">State Region *</div><div class="fl bg" id="f1b" style="color:#1f2124;top:32.8px;letter-spacing:0.17px">Massachusetts</div>
   <div class="a" style="left:381.5px;top:27.6px;border-left:5.5px solid transparent;border-right:5.5px solid transparent;border-top:5.5px solid #6b6b6b"></div>
 </div>
 <div class="f" style="left:492px;top:72px;width:411px;border-radius:0">
   <div class="fl sm" id="f2a" style="top:12.6px;letter-spacing:0.08px">Postal Code/ZIP Code *</div><div class="fl bg" id="f2b" style="top:33.4px;letter-spacing:-0.07px">01420</div>
 </div>
 <!-- row 2 -->
 <div class="f dis" style="left:19px;top:157px;width:411px"><div class="fl ph" id="f3a" style="letter-spacing:-0.14px">Stock Symbol</div></div>
 <div class="f dis" style="left:492px;top:157px;width:411px"><div class="fl ph" id="f4a" style="letter-spacing:-0.31px">Stock Exchange</div>
   <div class="a" style="left:381px;top:28px;border-left:5.5px solid transparent;border-right:5.5px solid transparent;border-top:5.5px solid #9a9a9a"></div>
 </div>
 <!-- row 3 -->
 <div class="f" style="left:19px;top:242px;width:411px"><div class="fl ph" id="f5a" style="letter-spacing:-0.11px">Website/Online Presence *</div></div>
 <div class="f" style="left:492px;top:242px;width:411px"><div class="fl ph" id="f6a" style="letter-spacing:-0.5px">Reference ID</div></div>
 <div class="t" id="i1" style="left:907.6px;top:269.4px;font-family:'Liberation Serif',serif;font-style:italic;font-weight:bold;font-size:25.5px;color:#1a6fe0">i</div>
 <!-- row 4 -->
 <div class="f" style="left:19px;top:328px;width:411px"><div class="fl ph" id="f7a" style="letter-spacing:-0.08px">Business Email Address *</div></div>
 <div class="t" id="i2" style="left:434.6px;top:355.4px;font-family:'Liberation Serif',serif;font-style:italic;font-weight:bold;font-size:25.5px;color:#1a6fe0">i</div>
 <div class="f" style="left:492px;top:328px;width:415px">
   <div class="fl sm" id="f8a" style="top:13.8px;letter-spacing:0.14px">Support Email Address*</div><div class="fl bg" id="f8b" style="letter-spacing:-0.01px">chaosgivenment@gmail.com</div>
 </div>
 <!-- row 5 -->
 <div class="f" style="left:19px;top:413px;width:415px">
   <div class="fl sm" id="f9a" style="letter-spacing:0.06px">Support Phone Number *</div><div class="fl bg" id="f9b" style="letter-spacing:-0.02px">+19783535467</div>
 </div>
 <!-- buttons -->
 <div class="a" style="left:394px;top:536px;width:89px;height:39px;border:1px solid #dc3545;border-radius:4px"></div>
 <div class="t" id="b1" style="left:412px;top:548px;font-size:16.9px;color:#dc3545;letter-spacing:-0.38px">Cancel</div>
 <div class="a" style="left:492px;top:536px;width:74px;height:39px;border:1px solid #1a7cf0;border-radius:4px"></div>
 <div class="t" id="b2" style="left:511px;top:548.4px;font-size:16.2px;color:#1a7cf0;letter-spacing:-0.54px">Save</div>
</div>

<!-- ================= TASKBAR ================= -->
<div class="a" id="task"></div>
<!-- weather -->
<div class="a" style="left:32px;top:1028px;width:30px;height:30px;border-radius:50%;background:linear-gradient(160deg,#f7c832 10%,#f59a1c 55%,#ef6a14 100%)"></div>
<div class="a" style="left:46px;top:1017px;width:23px;height:23px;border-radius:50%;background:#d12d23"></div>
<div class="t" style="left:53px;top:1020px;font-size:16px;color:#fff">9</div>
<div class="t" id="w1" style="left:76px;top:1022.8px;font-size:18px;color:#fff;letter-spacing:-0.91px">29°C</div>
<div class="t" id="w2" style="left:76px;top:1046.8px;font-size:18px;color:#e4dfe0;letter-spacing:-0.39px">Sunny</div>
<!-- start -->
<svg style="left:509px;top:1027px" width="36" height="36" viewBox="0 0 36 36"><defs><linearGradient id="wg" x1="0" y1="0" x2="1" y2="1"><stop offset="0" stop-color="#7fe9ff"/><stop offset=".5" stop-color="#35c0f8"/><stop offset="1" stop-color="#1593f2"/></linearGradient></defs>
 <path d="M0.5 0.5H17V17H0.5ZM19 0.5H35.5V17H19ZM0.5 19H17V35.5H0.5ZM19 19H35.5V35.5H19Z" fill="url(#wg)"/></svg>
<!-- search pill -->
<div class="a" style="left:567px;top:1022px;width:326px;height:44px;border-radius:22px;background:#f3f3f2"></div>
<svg style="left:583px;top:1033px" width="24" height="24" viewBox="0 0 24 24"><circle cx="9.6" cy="9.6" r="7.4" fill="none" stroke="#262626" stroke-width="2.2"/><path d="M15 15L21.4 21.4" stroke="#262626" stroke-width="2.8" stroke-linecap="round"/></svg>
<div class="t" id="se" style="left:621px;top:1034px;font-size:21px;color:#4b4b4b;letter-spacing:-1.11px">Search</div>
<!-- peacock feather -->
<svg style="left:818.7px;top:1027.6px" width="34.4" height="30.6" viewBox="0 0 34.4 30.6"><defs>
 <linearGradient id="pf1" x1="0" y1="0" x2="1" y2="1"><stop offset="0" stop-color="#e4de22"/><stop offset=".35" stop-color="#3cb52c"/><stop offset=".7" stop-color="#0f9440"/><stop offset="1" stop-color="#0a7a4a"/></linearGradient>
 <linearGradient id="pf2" x1="0" y1="0" x2="1" y2="1"><stop offset="0" stop-color="#149848"/><stop offset="1" stop-color="#075a5c"/></linearGradient></defs>
 <path d="M22.6 17.4 C22 13,22.4 10.4,23.6 8.6 C26 11.6,27.2 15.4,26.8 19.6 Z M27.4 22.4 C27.4 18.6,28 16,29.4 14.4 C31.6 17.6,32.4 22,31.8 26.4 Z M21.8 20.6 C18.4 20.2,14.6 21,11.4 22.8 C14.8 24.6,19 24.8,23.2 23.6 Z M26.8 25 C23.6 25.2,20.4 26.2,17.6 28 C21.4 29.6,25.6 29.4,29.4 27.8 Z" fill="url(#pf2)"/>
 <path d="M17.8 16.6 C22.6 20.4,28.6 25.6,34.2 29.9 L33 30.6 C27.4 26.6,21.4 22,16.6 18 Z" fill="#0a6a50"/>
 <path d="M.6 3.6 C2.6 .6,8 -.6,12.6 1.2 C17.6 3.2,20.4 8,22.4 13.4 C23.6 16.4,24.8 19,25.6 21 C22.6 21.4,19.2 20.4,15.6 19.2 C10.4 17.6,5.4 15.4,2.6 11.4 C.8 8.8,-.2 5.8,.6 3.6Z" fill="url(#pf1)"/>
 <ellipse cx="10.6" cy="10.6" rx="7.3" ry="6.1" transform="rotate(32 10.6 10.6)" fill="#8a4a14"/>
 <circle cx="12.5" cy="11.1" r="5.1" fill="#1ccbea"/>
 <path d="M15.4 10 A3.8 3.8 0 1 0 13.2 14.4 A2.2 2.2 0 0 1 12.4 10.8 A2 2 0 0 1 15.4 10Z" fill="#0a22c4"/>
</svg>
<!-- diya -->
<svg style="left:856px;top:1030.3px" width="30.3" height="28.6" viewBox="0 0 30.3 28.6"><defs>
 <linearGradient id="dy1" x1="0" y1="0" x2="1" y2="0"><stop offset="0" stop-color="#e9a548"/><stop offset=".3" stop-color="#f0b95c"/><stop offset=".65" stop-color="#c98448"/><stop offset="1" stop-color="#a5562e"/></linearGradient>
 <linearGradient id="dy2" x1="0" y1="0" x2="0" y2="1"><stop offset="0" stop-color="#ffa01e"/><stop offset="1" stop-color="#ff8a18"/></linearGradient></defs>
 <path d="M.2 15.4 C.2 13.4,6.8 11.8,15.2 11.8 C23.6 11.8,30.1 13.4,30.1 15.4 C30.1 23,23.6 28.6,15.2 28.6 C6.8 28.6,.2 23,.2 15.4Z" fill="url(#dy1)"/>
 <ellipse cx="15.2" cy="15.6" rx="13.8" ry="3.5" fill="#9a5424"/>
 <ellipse cx="15.2" cy="17.4" rx="11.8" ry="3" fill="#f1e3cf"/>
 <ellipse cx="17.6" cy="18.4" rx="3" ry="1.2" fill="#f7e08a"/>
 <path d="M15.6 .2 C17.4 3,19.6 6.6,19.6 9.8 C19.6 13.4,17.8 16,15.2 16.2 C12.6 16,11.2 13.4,11.2 10.4 C11.2 6.6,14 3.6,15.6 .2Z" fill="url(#dy2)"/>
 <path d="M15.4 6 C16.6 8,17.6 9.8,17.4 12 C17.2 14,16.2 15,15.2 15 C14.2 15,13.4 13.8,13.4 12 C13.4 9.8,14.6 8,15.4 6Z" fill="#ffb84e" opacity=".8"/>
 <path d="M15.5 11.6 L13.4 19.2" stroke="#4a2a1a" stroke-width=".7" fill="none"/>
</svg>
<!-- task view -->
<div class="a" style="left:913px;top:1036px;width:27px;height:25px;border-radius:3px;background:#6f6f6f"></div>
<div class="a" style="left:922px;top:1027px;width:28px;height:25px;border-radius:3px;background:linear-gradient(180deg,#ffffff,#d9d9d9);box-shadow:-1px 1px 3px rgba(0,0,0,.45)"></div>
<!-- copilot -->
<svg style="left:979.8px;top:1028.6px" width="34" height="31" viewBox="0 0 34 31"><defs>
 <linearGradient id="cp1" x1="0" y1="0" x2="0" y2="1"><stop offset="0" stop-color="#1fb2f6"/><stop offset=".3" stop-color="#1594e6"/><stop offset=".6" stop-color="#4fb56a"/><stop offset=".85" stop-color="#e8cf12"/><stop offset="1" stop-color="#f7c90a"/></linearGradient>
 <linearGradient id="cp2" x1="0" y1="0" x2="0" y2="1"><stop offset="0" stop-color="#b452e6"/><stop offset=".45" stop-color="#ee4f92"/><stop offset=".8" stop-color="#f98a6a"/><stop offset="1" stop-color="#ffb455"/></linearGradient>
 <linearGradient id="cp3" x1="0" y1="0" x2="1" y2="1"><stop offset="0" stop-color="#0a3fd0"/><stop offset="1" stop-color="#138cf0"/></linearGradient>
 <linearGradient id="cp4" x1="0" y1="0" x2="1" y2="1"><stop offset="0" stop-color="#fb7a36"/><stop offset="1" stop-color="#e02a34"/></linearGradient></defs>
 <path d="M18.4 .3 H22 Q24.6 .3 25.3 3 L26.9 8.2 H20 Q17.4 8.2 16.6 10.6 Z" fill="url(#cp3)"/>
 <path d="M8.2 22.6 H16.6 L14 30.4 Q11.4 30.4 10.4 27.6 Z" fill="url(#cp4)"/>
 <path d="M7.6 .3 H19 L12.9 20.4 Q12.2 22.7 10 22.7 H3.4 Q-.2 22.7 .7 19.2 L4.3 3.6 Q5.1 .3 7.6 .3 Z" fill="url(#cp1)"/>
 <path d="M21.3 10.4 Q22 8.2 24.4 8.2 H30.4 Q34.2 8.2 33.3 11.8 L29.7 27 Q28.8 30.4 25.6 30.4 H15 Z" fill="url(#cp2)"/>
</svg>
<!-- file explorer -->
<svg style="left:1044px;top:1027px" width="38" height="34" viewBox="0 0 38 34">
 <path d="M1 5 A3 3 0 0 1 4 2 H12.6 L16.6 5.6 H34 A3 3 0 0 1 37 8.6 V13 H1Z" fill="#e8a61c"/>
 <path d="M1 9 H37 V30 A3 3 0 0 1 34 33 H4 A3 3 0 0 1 1 30Z" fill="#fccf3d"/>
 <path d="M8 33 V26 A3 3 0 0 1 11 23 H27 A3 3 0 0 1 30 26 V33Z" fill="#1877d1"/>
 <rect x="13" y="26.4" width="12" height="2.4" rx="1.2" fill="#0c4f9a"/>
</svg>
<div class="a" style="left:1059px;top:1068.4px;width:9.4px;height:4.4px;border-radius:2.2px;background:#a59a9d"></div>
<!-- thunderbird -->
<svg style="left:1110.8px;top:1026.7px" width="36.2" height="35.4" viewBox="0 0 36.2 35.4"><defs>
 <linearGradient id="tbg1" x1="0" y1="0" x2="0" y2="1"><stop offset="0" stop-color="#1c86e8"/><stop offset="1" stop-color="#146ad4"/></linearGradient>
 <linearGradient id="tbg2" x1="0" y1="0" x2="0" y2="1"><stop offset="0" stop-color="#ffffff"/><stop offset="1" stop-color="#b4dcfa"/></linearGradient></defs>
 <path d="M22.9 .3 C28 .3,32.4 2.2,34.2 5.4 L32.6 5.8 L34.6 7.4 L33.4 8 L35 9.6 C35.8 12,36.3 14.4,36 17 C35.4 27,28 35.3,18 35.3 C8 35.3,.2 28,.2 18.6 C.2 14,1 11.6,2 10.4 C2.2 12.6,2.8 13.6,3.6 14.4 C3.6 10,5.4 6.4,7.6 4.4 C9.6 6.6,10.8 9,10.8 11.8 C11.6 10.8,12.2 10,12.8 9.2 C14 4.6,18 .3,22.9 .3 Z" fill="url(#tbg1)"/>
 <path d="M12.6 9.4 C13.8 5,17.6 1.2,22.4 .6 C18.6 2.2,15.4 5.4,13.6 9.2 Z" fill="#a88cf0" opacity=".8"/>
 <circle cx="18.1" cy="18.3" r="8.9" fill="url(#tbg2)"/>
 <path d="M10.2 14.2 L18.1 20.9 L26 14.2 C24.6 11.4,21.6 9.4,18.1 9.4 C14.6 9.4,11.6 11.4,10.2 14.2Z" fill="#ffffff"/>
 <path d="M17.4 24.6 C21 26.6,25.4 25,27.6 21.6 C26.4 26,22.6 28.4,19 27.6 Z" fill="#7f74e4" opacity=".85"/>
 <path d="M4.6 22 C4.2 18.6,4.8 16,6.6 14.4 C5.8 17,5.8 19.6,6.4 22 Z" fill="#9a8af0" opacity=".7"/>
 <ellipse cx="18.9" cy="5.8" rx="1.05" ry=".75" fill="#fff"/>
</svg>
<!-- chrome (active) -->
<div class="a" style="left:1165px;top:1014px;width:60px;height:60px;border-radius:6px;background:rgba(255,255,255,.075);border:1px solid rgba(255,255,255,.06)"></div>
<svg style="left:1177px;top:1026px" width="36" height="36" viewBox="0 0 36 36">
 <circle cx="18" cy="18" r="18" fill="#fff"/>
 <path d="M18 18 L2.41 9 A18 18 0 0 1 33.59 9 Z" fill="#e33b2e"/>
 <path d="M18 18 L33.59 9 A18 18 0 0 1 18 36 Z" fill="#fcc31e"/>
 <path d="M18 18 L18 36 A18 18 0 0 1 2.41 9 Z" fill="#2da94f"/>
 <path d="M18 9 H33.59 A18 18 0 0 0 2.41 9Z" fill="#e33b2e"/>
 <path d="M25.8 22.5 L18 36 A18 18 0 0 0 33.59 9 H18Z" fill="#fcc31e"/>
 <path d="M10.2 22.5 L2.41 9 A18 18 0 0 0 18 36 L25.8 22.5Z" fill="#2da94f"/>
 <circle cx="18" cy="18" r="9" fill="#fff"/><circle cx="18" cy="18" r="7" fill="#3f7fee"/>
</svg>
<div class="a" style="left:1183px;top:1069px;width:24px;height:4px;border-radius:2px;background:#4cc2ff"></div>
<!-- teams -->
<svg style="left:1242px;top:1025px" width="36" height="36" viewBox="0 0 36 36"><defs>
 <linearGradient id="tm1" x1="0" y1="0" x2="1" y2="1"><stop offset="0" stop-color="#8f8af5"/><stop offset="1" stop-color="#5b4fe0"/></linearGradient>
 <linearGradient id="tm2" x1="0" y1="0" x2="1" y2="1"><stop offset="0" stop-color="#5558d8"/><stop offset="1" stop-color="#3434a8"/></linearGradient></defs>
 <circle cx="12.7" cy="6.4" r="5" fill="#8e8cf2"/>
 <path d="M22 14 H31.4 A2.6 2.6 0 0 1 34 16.6 V27 A7 7 0 0 1 22 31Z" fill="#6e5fea"/>
 <path d="M6.4 13.2 H23 A2.6 2.6 0 0 1 25.6 15.8 V26 A9.4 9.4 0 0 1 16.2 35.2 H15.6 A9.4 9.4 0 0 1 6.4 26Z" fill="url(#tm1)"/>
 <rect x=".8" y="16.7" width="15" height="15" rx="3" fill="url(#tm2)"/>
 <path d="M4.6 20.4 H12 V22.4 H9.4 V28.4 H7.2 V22.4 H4.6Z" fill="#fff"/>
</svg>
<div class="a" style="left:1259px;top:1020px;width:31px;height:23px;border-radius:12px;background:#4cc2ff"></div>
<div class="t" style="left:1265px;top:1023px;font-size:16.5px;color:#0a0a0a">36</div>
<div class="a" style="left:1257px;top:1068.4px;width:9.4px;height:4.4px;border-radius:2.2px;background:#a59a9d"></div>
<!-- notepad -->
<svg style="left:1313px;top:1025.6px" width="28" height="36.6" viewBox="0 0 28 36.6"><defs>
 <linearGradient id="np1" x1="0" y1="0" x2="1" y2="1"><stop offset="0" stop-color="#8ad8ee"/><stop offset="1" stop-color="#3fb0d4"/></linearGradient></defs>
 <path d="M0 31 H28 V34.4 A2.2 2.2 0 0 1 25.8 36.6 H2.2 A2.2 2.2 0 0 1 0 34.4Z" fill="#c0610f"/>
 <rect x="0" y="29.6" width="28" height="3.2" fill="#ece8e4"/>
 <path d="M0 4.4 A2.2 2.2 0 0 1 2.2 2.2 H25.8 A2.2 2.2 0 0 1 28 4.4 V30 H0Z" fill="url(#np1)"/>
 <path d="M4.4 0 L5.9 2.4 L4.4 4.8 L2.9 2.4Z M10.6 0 L12.1 2.4 L10.6 4.8 L9.1 2.4Z M17.4 0 L18.9 2.4 L17.4 4.8 L15.9 2.4Z M23.6 0 L25.1 2.4 L23.6 4.8 L22.1 2.4Z" fill="#0d6e96"/>
 <path d="M5 11.4H23M5 17.4H23M5 23.4H23" stroke="#0b6d94" stroke-width="2"/>
</svg>
<div class="a" style="left:1323px;top:1068.4px;width:9.4px;height:4.4px;border-radius:2.2px;background:#a59a9d"></div>
<!-- excel -->
<svg style="left:1376.6px;top:1027.6px" width="33" height="33" viewBox="0 0 33 33">
 <rect x="17" y="3.6" width="15.6" height="24.6" rx="1" fill="#21804a"/>
 <rect x="19.4" y="6.4" width="11" height="19" fill="#fff"/>
 <path d="M19.4 10.2H30.4M19.4 14H30.4M19.4 17.8H30.4M19.4 21.6H30.4M25 6.4V25.4" stroke="#21804a" stroke-width="1.3"/>
 <path d="M.6 4 L19.6 .4 V32.6 L.6 29Z" fill="#1c6d3e"/>
 <path d="M5.2 10 H8.4 L10.3 14.2 L12.4 10 H15.4 L11.9 16.4 L15.6 23 H12.4 L10.2 18.6 L8 23 H5 L8.6 16.4Z" fill="#fff"/>
</svg>
<div class="a" style="left:1389px;top:1068.4px;width:9.4px;height:4.4px;border-radius:2.2px;background:#a59a9d"></div>
<!-- tray -->
<svg style="left:1594px;top:1038px" width="18" height="11" viewBox="0 0 18 11"><path d="M1.4 9.6L9 2L16.6 9.6" fill="none" stroke="#fff" stroke-width="2" stroke-linecap="round" stroke-linejoin="round"/></svg>
<svg style="left:1638px;top:1031px" width="26" height="26" viewBox="0 0 26 26"><path d="M2 13 A10 10 0 0 1 21.6 6.6" fill="none" stroke="#fff" stroke-width="1.4"/><path d="M22.6 1.6V7.6H16.6" fill="none" stroke="#fff" stroke-width="1.4"/><path d="M22 13 A10 10 0 0 1 3 18.4" fill="none" stroke="#fff" stroke-width="1.4"/><path d="M2 24.4V18.4H8" fill="none" stroke="#fff" stroke-width="1.4"/><circle cx="19" cy="19" r="6" fill="#0a78d6"/></svg>
<svg style="left:1686px;top:1034px" width="26" height="20" viewBox="0 0 26 20"><path d="M1.4 7.4 A16.4 16.4 0 0 1 24.6 7.4" fill="none" stroke="#fff" stroke-width="1.7" stroke-linecap="round"/><path d="M5 11 A11.4 11.4 0 0 1 21 11" fill="none" stroke="#fff" stroke-width="1.7" stroke-linecap="round"/><path d="M8.6 14.4 A6.3 6.3 0 0 1 17.4 14.4" fill="none" stroke="#fff" stroke-width="1.7" stroke-linecap="round"/><circle cx="13" cy="17.6" r="1.8" fill="#fff"/></svg>
<svg style="left:1722px;top:1033px" width="28" height="22" viewBox="0 0 28 22"><path d="M1.4 7.4 H5.6 L11 2.4 V19.6 L5.6 14.6 H1.4Z" fill="none" stroke="#fff" stroke-width="1.6" stroke-linejoin="round"/><path d="M14.6 7.4 A5 5 0 0 1 14.6 14.6" fill="none" stroke="#fff" stroke-width="1.6" stroke-linecap="round"/><path d="M18 4.6 A9 9 0 0 1 18 17.4" fill="none" stroke="#fff" stroke-width="1.6" stroke-linecap="round"/><path d="M21.6 1.6 A13 13 0 0 1 21.6 20.4" fill="none" stroke="#fff" stroke-width="1.6" stroke-linecap="round"/></svg>
<svg style="left:1758px;top:1036px" width="26" height="17" viewBox="0 0 26 17"><rect x="1" y="1.4" width="21" height="14.2" rx="3.6" fill="none" stroke="#fff" stroke-width="1.7"/><rect x="3.8" y="4.2" width="8.6" height="8.6" rx="1.4" fill="#fff"/><path d="M23.6 6V11" stroke="#fff" stroke-width="2.4" stroke-linecap="round"/></svg>
<div class="t" id="ck1" style="right:30px;top:1022.8px;font-size:18px;color:#fff;text-align:right;letter-spacing:-0.39px">1:33 PM</div>
<div class="t" id="ck2" style="right:30px;top:1046.5px;font-size:18px;color:#fff;text-align:right;letter-spacing:0.49px">11/5/2025</div>

</body>
</html>
